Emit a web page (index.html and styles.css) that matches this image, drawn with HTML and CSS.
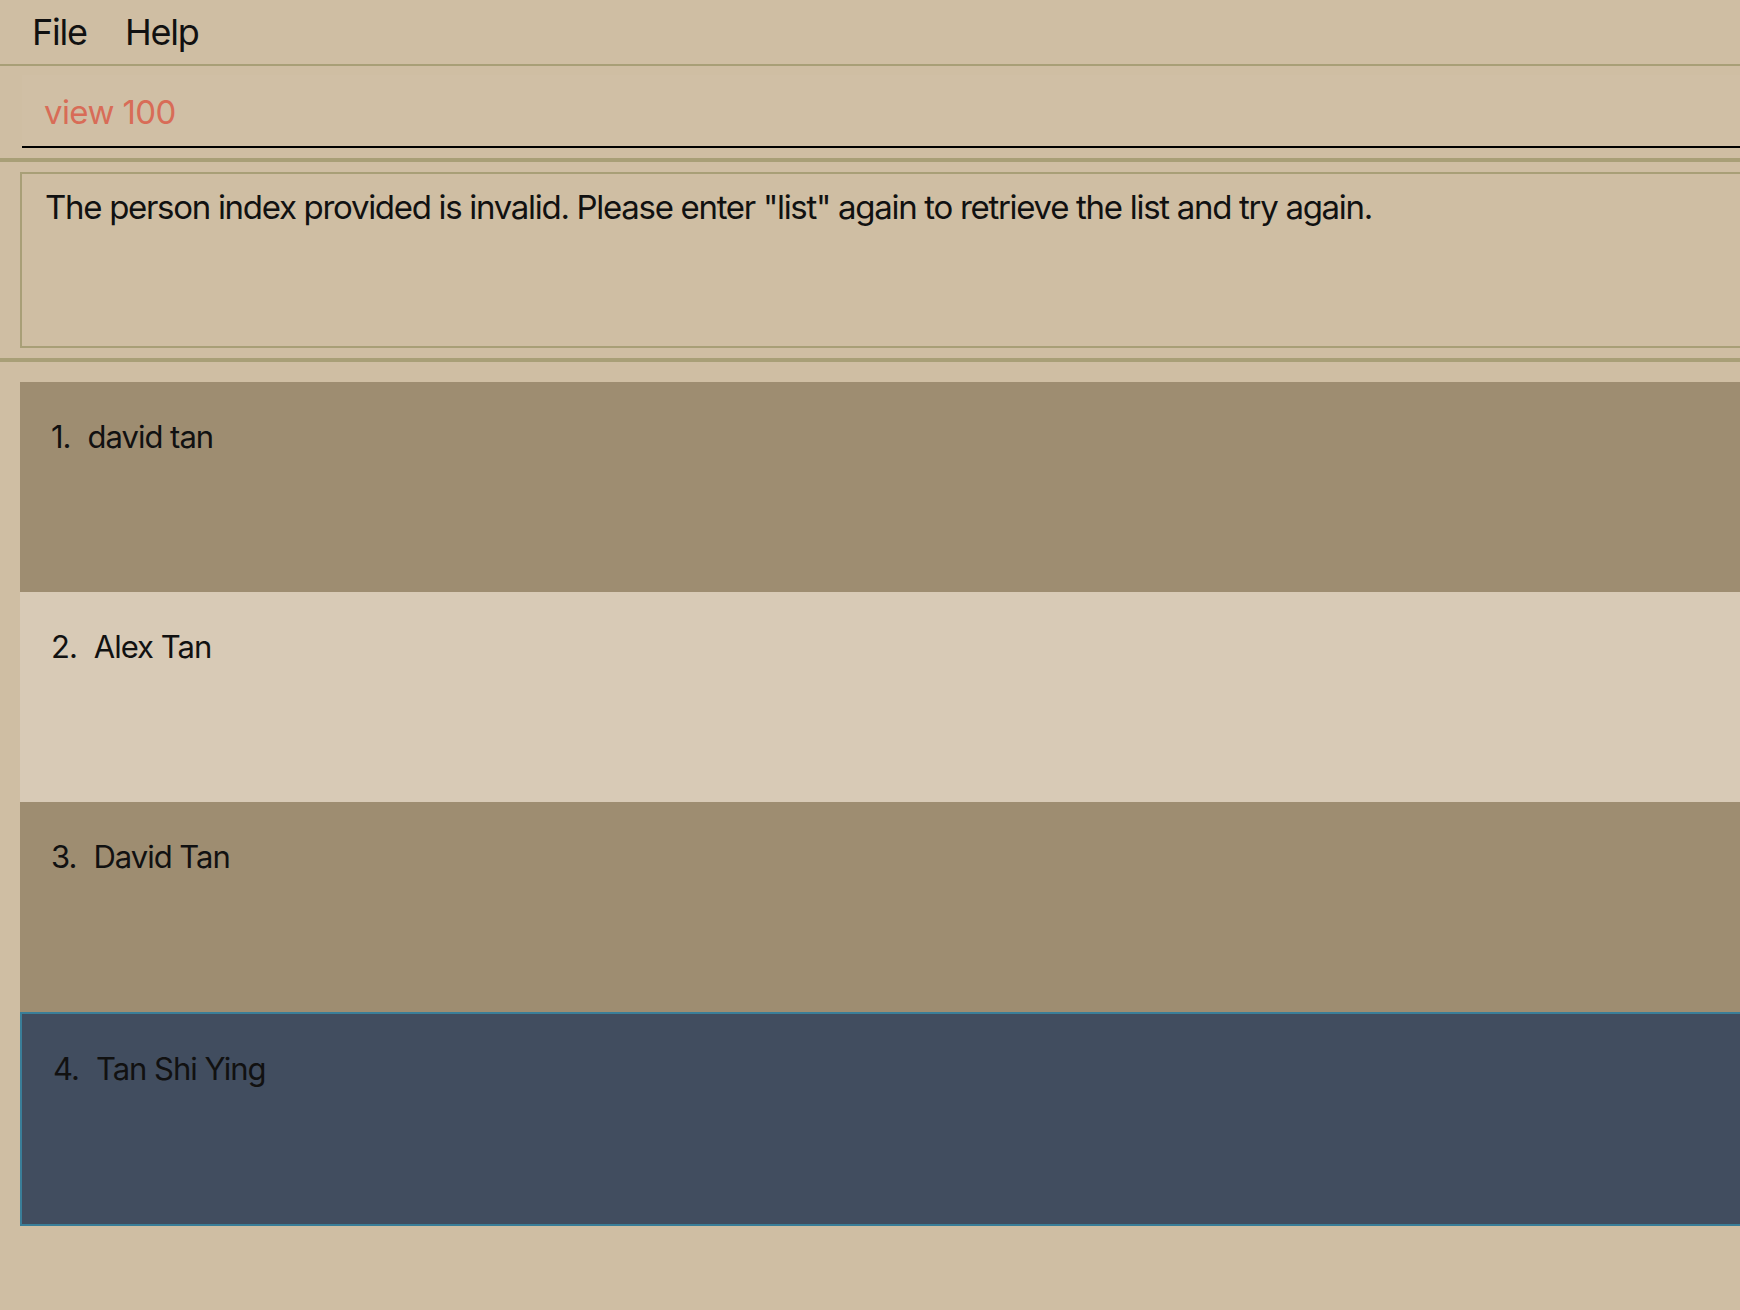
FILE: index.html
```html
<!DOCTYPE html>
<html>
<head>
<meta charset="utf-8">
<link rel="stylesheet" href="styles.css">
</head>
<body>
<div class="app">
  <div class="menubar">
    <span class="menu-item">File</span>
    <span class="menu-item">Help</span>
  </div>
  <div class="command-pane">
    <div class="command-box">view 100</div>
  </div>
  <div class="result-pane">
    <div class="result-box">The person index provided is invalid. Please enter "list" again to retrieve the list and try again.</div>
  </div>
  <div class="list-pane">
    <div class="card card-dark"><span class="idx">1.</span><span class="name">david tan</span></div>
    <div class="card card-light"><span class="idx">2.</span><span class="name">Alex Tan</span></div>
    <div class="card card-dark"><span class="idx">3.</span><span class="name">David Tan</span></div>
    <div class="card card-selected"><span class="idx">4.</span><span class="name">Tan Shi Ying</span></div>
  </div>
</div>
</body>
</html>
```
FILE: styles.css
```css
html, body {
  margin: 0;
  padding: 0;
  background: #cfbea3;
}
body {
  font-family: Inter, "Noto Sans", sans-serif;
  color: #111;
  width: 1740px;
  height: 1310px;
  overflow: hidden;
}
.app {
  display: flex;
  flex-direction: column;
}
.menubar {
  height: 64px;
  border-bottom: 2px solid #a89f77;
  display: flex;
  align-items: center;
  padding-left: 32px;
  gap: 38px;
}
.menu-item {
  font-size: 36px;
  letter-spacing: -1.2px;
}
.command-pane {
  padding: 9px 0 10px 22px;
  border-bottom: 4px solid #a89f77;
}
.command-box {
  height: 73px;
  box-sizing: border-box;
  background: #d0bfa5;
  border-bottom: 2px solid #000;
  color: #d86c57;
  font-size: 33px;
  letter-spacing: -0.6px;
  padding-left: 22px;
  line-height: 60px;
  padding-top: 7px;
}
.result-pane {
  padding: 10px 0 10px 20px;
  border-bottom: 4px solid #a89f77;
}
.result-box {
  height: 176px;
  box-sizing: border-box;
  border: 2px solid #a89f77;
  border-right: none;
  padding: 8px 0 0 23px;
  font-size: 33px;
  letter-spacing: -1.3px;
  line-height: 50px;
}
.list-pane {
  padding: 20px 0 0 20px;
  display: flex;
  flex-direction: column;
}
.card {
  height: 210px;
  box-sizing: border-box;
  padding: 35px 0 0 31px;
  font-size: 31px;
  letter-spacing: -1px;
  line-height: 40px;
  display: flex;
  gap: 17px;
}
.card-dark { background: #9e8d71; }
.card-light { background: #d8cab6; }
.card-selected {
  background: #414d5f;
  border: 2px solid #3a7e98;
  border-right: none;
  height: 214px;
  padding: 35px 0 0 31px;
}
```
